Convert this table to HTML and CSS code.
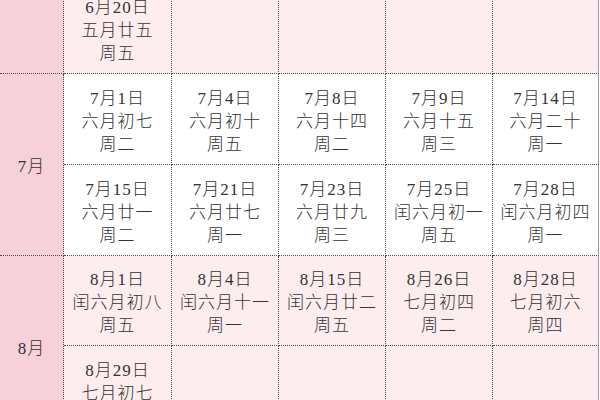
FILE: index.html
```html
<!DOCTYPE html>
<html lang="zh">
<head>
<meta charset="utf-8">
<link rel="stylesheet" href="styles.css">
</head>
<body>
<div class="cal">
  <div class="cell month jun"></div>
  <div class="cell pink"><span>6月20日</span><span>五月廿五</span><span>周五</span></div>
  <div class="cell pink"></div>
  <div class="cell pink"></div>
  <div class="cell pink"></div>
  <div class="cell pink last"></div>

  <div class="cell month jul">7月</div>
  <div class="cell white"><span>7月1日</span><span>六月初七</span><span>周二</span></div>
  <div class="cell white"><span>7月4日</span><span>六月初十</span><span>周五</span></div>
  <div class="cell white"><span>7月8日</span><span>六月十四</span><span>周二</span></div>
  <div class="cell white"><span>7月9日</span><span>六月十五</span><span>周三</span></div>
  <div class="cell white last"><span>7月14日</span><span>六月二十</span><span>周一</span></div>

  <div class="cell white"><span>7月15日</span><span>六月廿一</span><span>周二</span></div>
  <div class="cell white"><span>7月21日</span><span>六月廿七</span><span>周一</span></div>
  <div class="cell white"><span>7月23日</span><span>六月廿九</span><span>周三</span></div>
  <div class="cell white"><span>7月25日</span><span>闰六月初一</span><span>周五</span></div>
  <div class="cell white last"><span>7月28日</span><span>闰六月初四</span><span>周一</span></div>

  <div class="cell month aug">8月</div>
  <div class="cell pink"><span>8月1日</span><span>闰六月初八</span><span>周五</span></div>
  <div class="cell pink"><span>8月4日</span><span>闰六月十一</span><span>周一</span></div>
  <div class="cell pink"><span>8月15日</span><span>闰六月廿二</span><span>周五</span></div>
  <div class="cell pink"><span>8月26日</span><span>七月初四</span><span>周二</span></div>
  <div class="cell pink last"><span>8月28日</span><span>七月初六</span><span>周四</span></div>

  <div class="cell pink"><span>8月29日</span><span>七月初七</span><span>周五</span></div>
  <div class="cell pink"></div>
  <div class="cell pink"></div>
  <div class="cell pink"></div>
  <div class="cell pink last"></div>
</div>
</body>
</html>
```
FILE: styles.css
```css
html, body {
  margin: 0;
  padding: 0;
  background: #ffffff;
  overflow: hidden;
}
.cal {
  display: grid;
  grid-template-columns: 64px 108px 107px 107px 107px 106px;
  grid-template-rows: 91px 91px 91px 90px 91px;
  margin-top: -17px;
  font-family: "Liberation Serif", "Noto Sans CJK SC", serif;
  font-size: 17px;
  font-weight: 300;
  color: #333333;
}
.cell {
  box-sizing: border-box;
  border-right: 1px dotted #4a4a4a;
  border-bottom: 1px dotted #4a4a4a;
  display: flex;
  flex-direction: column;
  align-items: center;
  justify-content: center;
  padding-top: 4px;
  line-height: 23px;
  letter-spacing: 1px;
  white-space: nowrap;
}
.cell.last {
  border-right: 1px solid #9a9a9a;
}
.month {
  background: #f6d1da;
}
.jul {
  grid-row: span 2;
}
.aug {
  grid-row: span 2;
}
.pink {
  background: #fdedef;
}
.white {
  background: #ffffff;
}
```
